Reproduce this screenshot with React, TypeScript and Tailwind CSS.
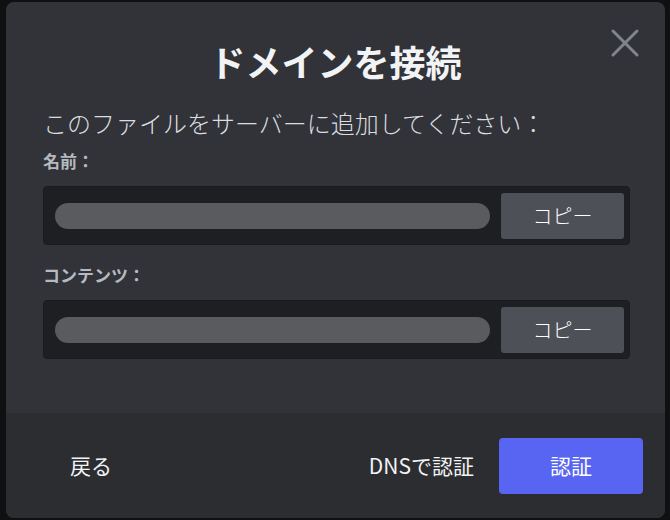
import { X } from 'lucide-react'

const font = { fontFamily: '"Noto Sans CJK JP", "Noto Sans", sans-serif' }

function CopyField() {
  return (
    <div className="flex items-center h-[59px] w-[587px] rounded-[4px] border border-[#1a1b1e] bg-[#1e1f22] pl-[11px] pr-[5px]">
      <div className="flex-1 h-[26px] rounded-full bg-[#5a5b5f]" />
      <button className="ml-[11px] w-[123px] h-[46px] rounded-[3px] bg-[#4e5058] text-[20px] leading-none text-white font-light">
        コピー
      </button>
    </div>
  )
}

export default function App() {
  return (
    <div className="w-[670px] h-[520px] bg-[#0f1011] pl-[6px] pt-[2px]" style={font}>
      <div className="relative flex flex-col w-[659px] h-[516px] rounded-lg bg-[#313338] overflow-hidden">
        <button className="absolute top-[17px] right-[16px] text-[#80848e]">
          <X className="w-[48px] h-[48px]" strokeWidth={1.5} />
        </button>

        <div className="flex-1 pl-[37px] pt-[37px]">
          <h1 className="text-center text-[36px] leading-[44px] font-bold text-[#f2f3f5] pr-[37px]">
            ドメインを接続
          </h1>
          <p className="mt-[24px] text-[24px] leading-[32px] font-light text-[#dbdee1]">
            このファイルをサーバーに追加してください：
          </p>

          <div className="mt-[11px] text-[17px] leading-[22px] font-bold text-[#b5bac1]">名前：</div>
          <div className="mt-[14px]">
            <CopyField />
          </div>

          <div className="mt-[19px] text-[17px] leading-[22px] font-bold text-[#b5bac1]">コンテンツ：</div>
          <div className="mt-[14px]">
            <CopyField />
          </div>
        </div>

        {/* フッター */}
        <div className="flex items-center h-[105px] bg-[#2b2d31] pl-[64px] pr-[22px]">
          <button className="text-[21px] leading-none text-[#f2f3f5]">戻る</button>
          <div className="flex-1" />
          <button className="text-[21px] leading-none text-[#f2f3f5]">DNSで認証</button>
          <button className="ml-[25px] w-[144px] h-[56px] rounded-[4px] bg-[#5865f2] text-[21px] leading-none text-white">
            認証
          </button>
        </div>
      </div>
    </div>
  )
}
